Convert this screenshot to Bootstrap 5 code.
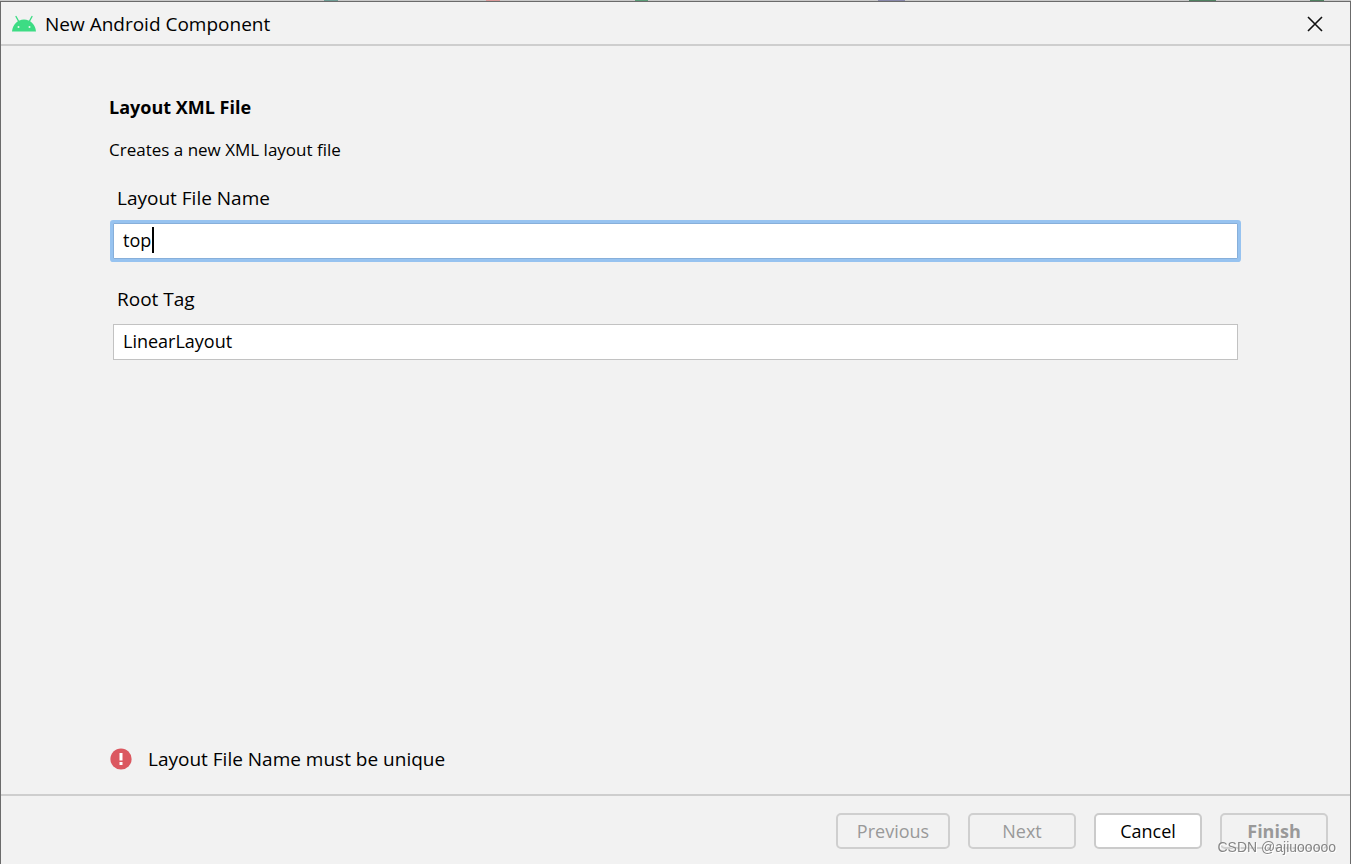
<!DOCTYPE html>
<html lang="en">
<head>
<meta charset="utf-8">
<meta name="viewport" content="width=device-width, initial-scale=1">
<title>New Android Component</title>
<link href="https://cdn.jsdelivr.net/npm/bootstrap@5.3.0/dist/css/bootstrap.min.css" rel="stylesheet">
<style>
  body { font-family: "Open Sans", "Noto Sans", sans-serif; font-size: 19px; line-height: 24px; color: #000; background: #f2f2f2; }
  .backdrop-strip { height: 1px; background: linear-gradient(90deg, #c9c9c9 0 24%, #6f9c95 24% 25%, #c9c9c9 25% 36%, #d99a9a 36% 37%, #c9c9c9 37% 47%, #5c9c78 47% 48%, #c9c9c9 48% 65%, #8888aa 65% 67%, #c9c9c9 67% 88%, #4f8060 88% 90%, #c9c9c9 90% 97%, #4f8060 97% 98%, #c9c9c9 98%); }
  .dialog-window { border: 1px solid #6b6b6b; border-bottom: 0; }
  .title-bar { height: 44px; padding: 2px 27px 0 10px; border-bottom: 2px solid #cecece; }
  .close-btn { line-height: 0; }
  .wizard-body { padding: 49px 108px 23px; }
  .page-title { font-size: 18px; line-height: 24px; margin-bottom: 19px; }
  .page-note { font-size: 17px; line-height: 24px; }
  .wizard-fields { padding: 0 4px; }
  .field-label { line-height: 24px; padding-left: 4px; margin-bottom: 13px; }
  .field-row { margin-bottom: 28px; }
  .field-input { height: 36px; border: 1px solid #c2c2c2; border-radius: 0; padding: 0 9px 2px; font-size: 18px; color: #000; background: #fff; }
  .field-input.is-active { border-color: #87afda; box-shadow: 0 0 0 3px #97c3f0; border-radius: 1px; }
  .text-caret { left: 39px; top: 4px; width: 2px; height: 26px; background: #000; }
  .button-bar { padding: 17px 22px 15px; gap: 18px; border-top: 2px solid #cecece; }
  .wizard-btn { width: 108px; height: 36px; padding: 0; font-size: 18px; line-height: 24px; border: 2px solid #cbcbcb; border-radius: 5px; color: #000; background: #fff; }
  .wizard-btn.wide { width: 114px; }
  .wizard-btn:disabled { color: #999; border-color: #cfcfcf; background: transparent; opacity: 1; }
  .watermark { right: 15px; bottom: 8px; font: 14px/18px "Liberation Sans", sans-serif; color: #858585; text-shadow: 1px 1px 0 #fff; }
</style>
</head>
<body>
<div class="d-flex flex-column min-vh-100">
  <div class="backdrop-strip"></div>
  <main class="dialog-window flex-grow-1 d-flex flex-column">
    <header class="title-bar d-flex align-items-center">
      <svg width="26" height="18" viewBox="0 0 26 18" aria-hidden="true">
        <path d="M8 7L5 1.500M18 7L21 1.500" fill="none" stroke="#3ddc84" stroke-width="1.400" stroke-linecap="round"/>
        <path d="M1 16.500C1.600 9.500 6.500 4.500 13 4.500S24.400 9.500 25 16.500Z" fill="#3ddc84"/>
        <circle cx="7.500" cy="12" r="1" fill="#e9f7ef"/><circle cx="18.500" cy="12" r="1" fill="#e9f7ef"/>
      </svg>
      <span class="ms-2 me-auto">New Android Component</span>
      <button type="button" class="close-btn btn p-0 border-0" aria-label="Close">
        <svg width="16" height="16" viewBox="0 0 16 16"><path d="M1 1L15 15M15 1L1 15" stroke="#111" stroke-width="1.600"/></svg>
      </button>
    </header>
    <form class="flex-grow-1 d-flex flex-column">
      <section class="wizard-body flex-grow-1 d-flex flex-column">
        <h1 class="page-title fw-bold">Layout XML File</h1>
        <p class="page-note mb-4">Creates a new XML layout file</p>
        <div class="wizard-fields">
          <label class="field-label d-block" for="fileName">Layout File Name</label>
          <div class="field-row position-relative">
            <input class="field-input is-active w-100 d-block" id="fileName" type="text" value="top">
            <span class="text-caret position-absolute"></span>
          </div>
          <label class="field-label d-block" for="rootTag">Root Tag</label>
          <input class="field-input w-100 d-block" id="rootTag" type="text" value="LinearLayout">
        </div>
        <div class="mt-auto d-flex align-items-center gap-3" role="alert">
          <svg width="23" height="22" viewBox="0 0 23 22" aria-hidden="true"><circle cx="12" cy="11" r="10.600" fill="#db5860"/><path d="M10.500 5h3v7.500h-3zM10.500 14h3v3h-3z" fill="#fff"/></svg>
          <span>Layout File Name must be unique</span>
        </div>
      </section>
      <footer class="button-bar d-flex justify-content-end">
        <button type="button" class="wizard-btn wide btn" disabled>Previous</button>
        <button type="button" class="wizard-btn btn" disabled>Next</button>
        <button type="button" class="wizard-btn btn">Cancel</button>
        <button type="submit" class="wizard-btn btn fw-bold" disabled>Finish</button>
      </footer>
    </form>
  </main>
</div>
<div class="watermark position-fixed">CSDN @ajiuooooo</div>
<script src="https://cdn.jsdelivr.net/npm/bootstrap@5.3.0/dist/js/bootstrap.bundle.min.js"></script>
</body>
</html>
